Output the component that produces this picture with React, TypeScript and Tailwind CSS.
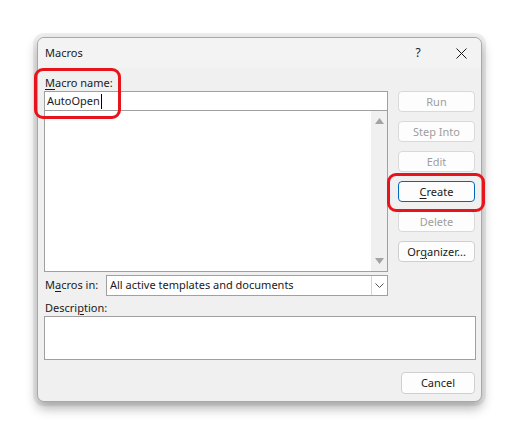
import React from "react";

const font = { fontFamily: '"Noto Sans", "Open Sans", sans-serif' };

function Btn({ label, disabled, focus, u }: { label: string; disabled?: boolean; focus?: boolean; u?: number }) {
  const text =
    u === undefined ? (
      label
    ) : (
      <>
        {label.slice(0, u)}
        <span className="underline underline-offset-2">{label[u]}</span>
        {label.slice(u + 1)}
      </>
    );
  return (
    <div
      className={
        "h-[21px] w-full flex items-center justify-center rounded-[4px] bg-[#fdfdfd] text-[11px] leading-none " +
        (focus
          ? "border border-[#0067c0] text-[#1a1a1a]"
          : disabled
            ? "border border-[#d9d9d9] text-[#9d9d9d]"
            : "border border-[#cfcfcf] text-[#1a1a1a]")
      }
    >
      {text}
    </div>
  );
}

export default function App() {
  return (
    <div className="relative w-[520px] h-[439px] bg-white overflow-hidden" style={font}>
      <div className="pl-[37px] pt-[37px]">
        {/* Dialog */}
        <div className="w-[445px] h-[365px] bg-[#f0f0f0] border border-[#a8a8a8] rounded-[7px] shadow-[0_0_0_4px_rgba(0,0,0,0.06),0_6px_12px_rgba(0,0,0,0.32)] flex flex-col">
          {/* Title bar */}
          <div className="h-[30px] flex items-center pl-[7px] pr-[13px] text-[11px] text-[#1a1a1a] bg-[#f3f3f3] rounded-t-[7px]">
            <span className="flex-1">Macros</span>
            <span className="w-[14px] text-center text-[12px]">?</span>
            <span className="w-[31px]" />
            <svg width="11" height="11" viewBox="0 0 11 11" className="mr-[1px]">
              <path d="M0.5 0.5 L10.5 10.5 M10.5 0.5 L0.5 10.5" stroke="#1a1a1a" strokeWidth="1" fill="none" />
            </svg>
          </div>

          {/* Body */}
          <div className="flex flex-col px-[6px] pt-[7px] text-[11px] text-[#1a1a1a]">
            <div className="flex gap-[10px]">
              <div className="w-[344px] flex flex-col">
                <div className="h-[16px] leading-[16px] pl-[1px]">
                  <span className="underline underline-offset-2">M</span>acro name:
                </div>
                <div className="h-[19px] bg-white border border-b-0 border-[#a0a0a0] flex items-center pl-[2px]">
                  <span>AutoOpen</span>
                  <span className="w-[1px] h-[15px] bg-black ml-[1px]" />
                </div>
                <div className="h-[162px] bg-white border border-[#a0a0a0] flex justify-end">
                  <div className="w-[16px] bg-[#f0f0f0] flex flex-col items-center justify-between py-[7px]">
                    <svg width="9" height="6" viewBox="0 0 9 6">
                      <path d="M4.5 0 L9 6 L0 6 Z" fill="#a3a3a3" />
                    </svg>
                    <svg width="9" height="6" viewBox="0 0 9 6">
                      <path d="M0 0 L9 0 L4.5 6 Z" fill="#a3a3a3" />
                    </svg>
                  </div>
                </div>
              </div>
              <div className="w-[77px] flex flex-col gap-[9px] pt-[16px]">
                <Btn label="Run" disabled />
                <Btn label="Step Into" disabled />
                <Btn label="Edit" disabled />
                <Btn label="Create" focus u={0} />
                <Btn label="Delete" disabled />
                <Btn label="Organizer..." u={2} />
              </div>
            </div>

            {/* Macros in */}
            <div className="flex items-center mt-[3px] w-[344px]">
              <div className="w-[62px] pl-[1px]">
                M<span className="underline underline-offset-2">a</span>cros in:
              </div>
              <div className="flex-1 h-[21px] bg-white border border-[#a0a0a0] flex items-center">
                <span className="flex-1 pl-[3px]">All active templates and documents</span>
                <div className="w-[16px] h-full border-l border-[#d4d4d4] flex items-center justify-center">
                  <svg width="9" height="5" viewBox="0 0 9 5">
                    <path d="M0.5 0.5 L4.5 4.5 L8.5 0.5" stroke="#555" strokeWidth="1" fill="none" />
                  </svg>
                </div>
              </div>
            </div>

            {/* Description */}
            <div className="h-[16px] leading-[16px] mt-[4px] pl-[1px]">
              Descri<span className="underline underline-offset-2">p</span>tion:
            </div>
            <div className="h-[44px] w-[432px] bg-white border border-[#a0a0a0]" />

            <div className="flex justify-end mt-[12px]">
              <div className="w-[74px] h-[22px] flex items-center justify-center rounded-[4px] bg-[#fdfdfd] border border-[#cfcfcf] text-[11px]">
                Cancel
              </div>
            </div>
          </div>
        </div>
      </div>

      {/* Red annotation frames */}
      <div className="absolute left-[34px] top-[68px] w-[87px] h-[51px] border-[3px] border-[#e8141c] rounded-[9px]" />
      <div className="absolute left-[387px] top-[173px] w-[98px] h-[39px] border-[3px] border-[#e8141c] rounded-[9px]" />
    </div>
  );
}
